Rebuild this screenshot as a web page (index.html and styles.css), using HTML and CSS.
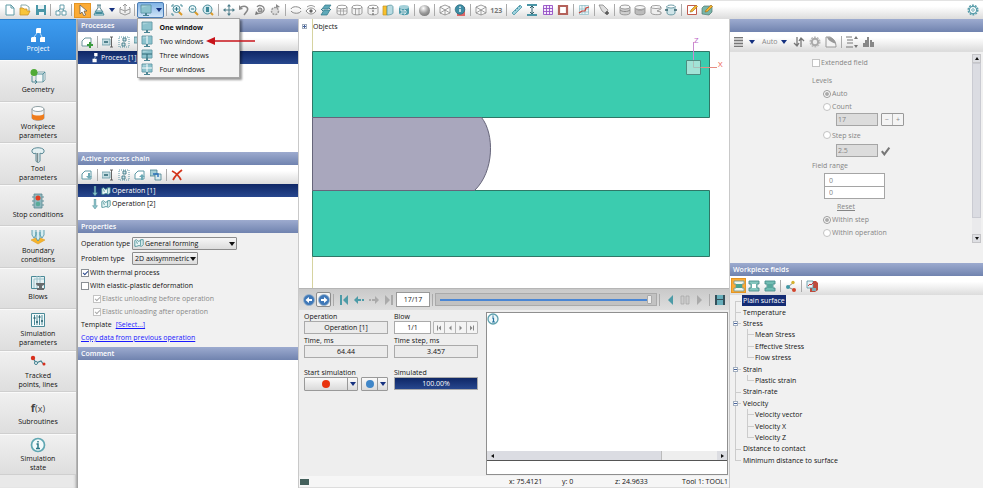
FILE: index.html
```html
<!DOCTYPE html>
<html lang="en">

<head>
    <meta charset="UTF-8">
    <meta name="viewport" content="width=device-width, initial-scale=1.0">
    <title>Simulation</title>
    <link rel="stylesheet" href="styles.css">
</head>

<body>
    <!-- Icon sprite -->
    <svg class="sprite" aria-hidden="true">
        <symbol id="doc" viewBox="0 0 12 12"><path d="M2 1h5l3 3v7H2z" fill="#fff" stroke="#5f9aa5"/><path d="M7 1v3h3" fill="none" stroke="#5f9aa5"/></symbol>
        <symbol id="open" viewBox="0 0 12 12"><path d="M2 6V1h5l3 2v5" fill="#fff" stroke="#8aa"/><path d="M1 11V4h3l1 1h3v2h3l-2 4z" fill="#f8c53a" stroke="#c8922a" stroke-width=".8"/></symbol>
        <symbol id="save" viewBox="0 0 12 12"><path d="M1 1h10v10H1z" fill="#4a97a8"/><path d="M3 1h6v4H3zM4 8h5v3H4z" fill="#e9f2f4"/></symbol>
        <symbol id="tree" viewBox="0 0 12 12"><path d="M5 1h4v4H5zM1 7h4v4H1zM7 7h4v4H7z" fill="#fff" stroke="#5795a3" stroke-width=".9"/><path d="M3 7l2-2M8 5l1 2" stroke="#5795a3"/></symbol>
        <symbol id="process" viewBox="0 0 12 12"><path d="M5 0h4v4H5zM3 7h5v4H3z" fill="#fff"/><path d="M7 4L5 7" stroke="#b9dbe2"/></symbol>
        <symbol id="pointer" viewBox="0 0 12 12"><path d="M3 1v9l2-2 2 4 1.500-1L7 7h3z" fill="#fff" stroke="#555" stroke-width=".7"/></symbol>
        <symbol id="flask" viewBox="0 0 12 12"><path d="M4 1h4M5 1v3L2 8h8L7 4V1" fill="#fff" stroke="#55808c"/><path d="M3 7h6l2 4H1z" fill="#e8f4f6" stroke="#438c9c"/><path d="M3 8h6l1 2H2z" fill="#438c9c"/></symbol>
        <symbol id="box" viewBox="0 0 12 12"><path d="M2 3l-1 1v5l5 2 5-2V4l-1-1M1 5l5 2 5-2M6 0v9M4 2l2-2 2 2" fill="none" stroke="#9a9a9a"/></symbol>
        <symbol id="screen" viewBox="0 0 12 12"><path d="M1 1h10v8H1z" fill="#a9d3db" stroke="#4d8694" stroke-width=".8"/><path d="M1 4l10-3v8H1z" fill="#6fb2bf" opacity=".5"/><path d="M5 9h2v2h2v1H3v-1h2z" fill="#4d8694"/></symbol>
        <symbol id="screen2" viewBox="0 0 12 12"><use href="#screen"/><path d="M6 1v8" stroke="#fff"/></symbol>
        <symbol id="screen3" viewBox="0 0 12 12"><use href="#screen"/><path d="M1 5h10M6 5v4" stroke="#2d6774"/></symbol>
        <symbol id="screen4" viewBox="0 0 12 12"><use href="#screen"/><path d="M6 1v8M1 5h10" stroke="#fff"/></symbol>
        <symbol id="lens" viewBox="0 0 12 12"><path d="M7.500 7.500L11 11" stroke="#dc9a28" stroke-width="2"/><circle cx="5.500" cy="5" r="3.500" fill="#e4f4f7" stroke="#4b8d9b"/></symbol>
        <symbol id="zoomin" viewBox="0 0 12 12"><path d="M1 3V1h2M9 1h2v2M1 9v2h2" fill="none" stroke="#4b8d9b"/><use href="#lens"/><path d="M3.500 5h4M5.500 3v4" stroke="#2b7282"/></symbol>
        <symbol id="zoomout" viewBox="0 0 12 12"><use href="#lens"/><path d="M4 5h3" stroke="#2b7282"/></symbol>
        <symbol id="zoomfit" viewBox="0 0 12 12"><path d="M8 8l3 3" stroke="#dc9a28" stroke-width="2"/><circle cx="5.500" cy="5.500" r="4.500" fill="#cfe8ed" stroke="#4b8d9b"/><path d="M4 3h3v5H4z" fill="#3c8797"/></symbol>
        <symbol id="move" viewBox="0 0 12 12"><path d="M6 1v10M1 6h10" stroke="#4c7d89"/><path d="M6 0l2 2.500H4zM6 12l2-2.500H4zM0 6l2.500-2v4zM12 6L9.500 4v4z" fill="#4c7d89"/></symbol>
        <symbol id="rotate" viewBox="0 0 12 12"><path d="M3 3c5-2 8 1 6 4L6 11" fill="none" stroke="#888" stroke-width="1.500"/><path d="M1 1v5l4-1z" fill="#888"/></symbol>
        <symbol id="orbit" viewBox="0 0 12 12"><path d="M3 3c2-3 8-1 7 3-1 3-4 4-6 3" fill="none" stroke="#888" stroke-width="1.300"/><circle cx="6" cy="6" r="2" fill="#bbb" stroke="#777"/><path d="M1 11l1-4 3 3z" fill="#777"/></symbol>
        <symbol id="spin" viewBox="0 0 12 12"><circle cx="6" cy="7" r="3.500" fill="#ddd" stroke="#999" stroke-width="1.500" stroke-dasharray="2 1"/><path d="M7 0l4 3-4 1z" fill="#888"/></symbol>
        <symbol id="loop" viewBox="0 0 12 12"><path d="M1 5c1-3 8-3 10 0M11 7c-1 3-8 3-10 0" fill="none" stroke="#888"/></symbol>
        <symbol id="eye" viewBox="0 0 12 12"><path d="M1 7c3-4 7-4 10 0-3 4-7 4-10 0z" fill="#fff" stroke="#888"/><circle cx="6" cy="7" r="1.700" fill="#666"/><path d="M2 3c3-2 5-2 8 0" fill="none" stroke="#999"/></symbol>
        <symbol id="layers" viewBox="0 0 12 12"><path d="M5 1h6L8 5H2z" fill="#5fa9b9" stroke="#2f7686" stroke-width=".7"/><path d="M4 6h6l-3 5H1z" fill="#5fa9b9" stroke="#2f7686" stroke-width=".7"/><path d="M1 5l2 2M9 4l2 2" stroke="#2f7686"/></symbol>
        <symbol id="cyl" viewBox="0 0 12 12"><path d="M1 3v6c0 2.500 10 2.500 10 0V3" fill="#f2f2f2" stroke="#888" stroke-width=".8"/><ellipse cx="6" cy="3" rx="5" ry="1.800" fill="#fff" stroke="#888" stroke-width=".8"/></symbol>
        <symbol id="cylgrid" viewBox="0 0 12 12"><use href="#cyl"/><path d="M1 7h10M4.500 5v6M7.500 5v6" stroke="#999" stroke-width=".7"/></symbol>
        <symbol id="cylhalf" viewBox="0 0 12 12"><use href="#cyl"/><path d="M4.500 4.500V11M8 4v7" stroke="#888" stroke-width=".7"/></symbol>
        <symbol id="cyldash" viewBox="0 0 12 12"><use href="#cyl"/><path d="M6 3v8" stroke="#555" stroke-dasharray="2 1"/></symbol>
        <symbol id="cylcut" viewBox="0 0 12 12"><path d="M1 2h4v9H1z" fill="#f8c02c" stroke="#c59322" stroke-width=".7"/><path d="M5 2c5-2 6 0 6 1v6c0 1-3 2-6 2z" fill="#b8dbe2" stroke="#478997" stroke-width=".7"/></symbol>
        <symbol id="cyl3d" viewBox="0 0 12 12"><path d="M1 3v6c0 3 10 3 10 0V3" fill="#4f9bab"/><ellipse cx="6" cy="3" rx="5" ry="2" fill="#a3d0d9"/><path d="M2 6h2v4H2M6 6v4h1l1-1V7L7 6z" fill="none" stroke="#fff" stroke-width=".8"/></symbol>
        <symbol id="mesh" viewBox="0 0 12 12"><path d="M1 3l5-2 5 2v6l-5 2-5-2zM1 3l5 3 5-3M6 6v5M1 9l5-3 5 3" fill="#fafafa" stroke="#888" stroke-width=".8"/></symbol>
        <symbol id="meshinfo" viewBox="0 0 12 12"><path d="M3 3h8v9H3z" fill="#d66"/><circle cx="6" cy="5.500" r="4.800" fill="#3e8da5" stroke="#28697a" stroke-width=".7"/><path d="M6 5v3M6 2.500v1.500" stroke="#fff" stroke-width="1.400"/></symbol>
        <symbol id="ruler" viewBox="0 0 12 12"><path d="M1 9l8-8 2 2-8 8z" fill="#9cd0dc" stroke="#4b95a6" stroke-width=".8"/><path d="M4 6l1 1M6 4l1 1M8 2l1 1" stroke="#4b95a6"/></symbol>
        <symbol id="gap" viewBox="0 0 12 12"><path d="M1 0h10v2H1zM1 10h10v2H1z" fill="#4b95a6"/><path d="M6 2v8M4 4l2-2 2 2M4 8l2 2 2-2" fill="none" stroke="#33616c"/></symbol>
        <symbol id="grid" viewBox="0 0 12 12"><path d="M1.500 1.500h9v9h-9zM4.500 1v10M7.500 1v10M1 4.500h10M1 7.500h10" fill="#f4e9fb" stroke="#9550c5" stroke-width=".9"/></symbol>
        <symbol id="frame" viewBox="0 0 12 12"><path d="M2 2h8v8H2z" fill="#fff" stroke="#b4615a" stroke-width="2.200"/></symbol>
        <symbol id="chart" viewBox="0 0 12 12"><path d="M1.500 1.500h9v9h-9zM4 1v9M7 1v9M1 5h10M1 8h10" fill="#eaf5f7" stroke="#8cbac4" stroke-width=".7"/><path d="M1 9l3-2h3l1-3 3-1" fill="none" stroke="#c94137" stroke-width="1.200"/></symbol>
        <symbol id="cutadd" viewBox="0 0 12 12"><path d="M1 1h4l5 5-2 4-4-3z" fill="#ddd" stroke="#888" stroke-width=".8"/><path d="M9 7v4M7 9h4" stroke="#555" stroke-width="1.500"/></symbol>
        <symbol id="drum" viewBox="0 0 12 12"><path d="M1 3v6c0 2.500 10 2.500 10 0V3" fill="#cfcfcf" stroke="#888" stroke-width=".8"/><ellipse cx="6" cy="3" rx="5" ry="2" fill="#f6f6f6" stroke="#888" stroke-width=".8"/><path d="M1 6c2 2 8 2 10 0" fill="none" stroke="#888"/></symbol>
        <symbol id="drumhalf" viewBox="0 0 12 12"><path d="M1 4v5c0 2.500 10 2.500 10 0V4l-3 2H4z" fill="#bbb" stroke="#888" stroke-width=".8"/><ellipse cx="6" cy="3.500" rx="5" ry="2" fill="#f6f6f6" stroke="#888" stroke-width=".8"/></symbol>
        <symbol id="drumcut" viewBox="0 0 12 12"><path d="M1 3v6c1 2 8 2 10 1V8L7 7l4-2V3" fill="#eee" stroke="#888" stroke-width=".8"/><ellipse cx="6" cy="3" rx="5" ry="1.500" fill="#fff" stroke="#888" stroke-width=".8"/></symbol>
        <symbol id="drumblue" viewBox="0 0 12 12"><path d="M2 2v7c0 2.500 8 2.500 8 0V2" fill="#cfe4e8" stroke="#4c8592" stroke-width=".8"/><ellipse cx="6" cy="2.500" rx="4" ry="1.500" fill="#fff" stroke="#4c8592" stroke-width=".8"/><path d="M0 6h3M9 6h3" stroke="#33616c" stroke-width="1.500"/></symbol>
        <symbol id="editbox" viewBox="0 0 12 12"><path d="M1.500 1.500h9v9h-9z" fill="#fff" stroke="#c05a4c"/><path d="M4 8l1-2 5-5 1.500 1.500-5 5z" fill="#f5b52e" stroke="#a06a1a" stroke-width=".6"/></symbol>
        <symbol id="editcube" viewBox="0 0 12 12"><path d="M1 4l2-2h8v6l-3 3-7-1z" fill="#77b5a9" stroke="#50776f" stroke-width=".7"/><path d="M4 8l1-2 5-5 1.500 1.500-5 5z" fill="#f5b52e" stroke="#a06a1a" stroke-width=".6"/></symbol>
        <symbol id="gear" viewBox="0 0 12 12"><circle cx="6" cy="6" r="4.800" fill="none" stroke="currentColor" stroke-width="1.500" stroke-dasharray="1.900 1.100"/><circle cx="6" cy="6" r="3.600" fill="#fff" stroke="currentColor" stroke-width="1.200"/><circle cx="6" cy="6" r="1.300" fill="none" stroke="currentColor" stroke-width=".8"/></symbol>
        <symbol id="add" viewBox="0 0 12 12"><path d="M1 10V5l3-3h6v8z" fill="#fff" stroke="#6d959e"/><path d="M9 6v6M6 9h6" stroke="#3a9b3e" stroke-width="2"/></symbol>
        <symbol id="addin" viewBox="0 0 12 12"><path d="M1 10V5l3-3h6v8z" fill="#fff" stroke="#5c98a5"/><path d="M7 4h2v3h2L8 10 5 7h2z" fill="#6ca9b5"/></symbol>
        <symbol id="addout" viewBox="0 0 12 12"><path d="M1 10V5l3-3h6v8z" fill="#fff" stroke="#5c98a5"/><path d="M7 11h2V8h2L8 5 5 8h2z" fill="#6ca9b5"/></symbol>
        <symbol id="rename" viewBox="0 0 12 12"><path d="M0 3h8v6H0z" fill="#c5dde2" stroke="#6799a5" stroke-width=".8"/><path d="M2 5h4v2H2z" fill="#50818c"/><path d="M8 1h3M8 11h3M9.500 1v10" stroke="#555" stroke-width=".9"/></symbol>
        <symbol id="copytree" viewBox="0 0 12 12"><path d="M1 1h10v10H1z" fill="none" stroke="#5c98a5" stroke-dasharray="1 1"/><path d="M5 2h3v3H5zM4 7h3v3H4z" fill="#cfe3e7" stroke="#3d7683" stroke-width=".9"/></symbol>
        <symbol id="shuffle" viewBox="0 0 12 12"><path d="M0 1h7v6H0z" fill="#a5ced6" stroke="#47818e" stroke-width=".8"/><path d="M5 5h6v6H5z" fill="#d7eaee" stroke="#47818e" stroke-width=".8"/><path d="M3 5h5v3" fill="none" stroke="#2a70bb" stroke-width="1.400"/></symbol>
        <symbol id="cross" viewBox="0 0 12 12"><path d="M1 2c4 2 7 5 9 9M11 1C7 4 4 7 2 11" fill="none" stroke="#d3351c" stroke-width="1.800"/></symbol>
        <symbol id="down" viewBox="0 0 12 12"><path d="M5 0h2v8h2l-3 4-3-4h2z" fill="#8cc6cc" stroke="#377884" stroke-width=".5"/></symbol>
        <symbol id="part" viewBox="0 0 12 12"><path d="M1 3l2-1 2 2 3-1V2h3v6l-2 2-3-1-3 1H1z" fill="#e8f5f5" stroke="#3f8a92"/><path d="M8 3v6M3 4l1 3" stroke="#3f8a92"/></symbol>
        <!-- step navigation -->
        <symbol id="circleleft" viewBox="0 0 12 12"><circle cx="6" cy="6" r="5.500" fill="#3f78b8" stroke="#9bb4cc" stroke-width=".8"/><path d="M2.500 6L6 3v2h3v2H6v2z" fill="#fff"/></symbol>
        <symbol id="circleright" viewBox="0 0 12 12"><circle cx="6" cy="6" r="5.500" fill="#3f78b8" stroke="#9bb4cc" stroke-width=".8"/><path d="M9.500 6L6 3v2H3v2h3v2z" fill="#fff"/></symbol>
        <symbol id="first" viewBox="0 0 12 12"><path d="M2 1h2v10H2zM10 1v10L5 6z" fill="currentColor"/></symbol>
        <symbol id="last" viewBox="0 0 12 12"><path d="M8 1h2v10H8zM2 1v10l5-5z" fill="currentColor"/></symbol>
        <symbol id="prev" viewBox="0 0 12 12"><path d="M1 6l4-4v3h3v2H5v3zM9 5h2v2H9z" fill="currentColor"/></symbol>
        <symbol id="next" viewBox="0 0 12 12"><path d="M11 6L7 2v3H4v2h3v3zM1 5h2v2H1z" fill="currentColor"/></symbol>
        <symbol id="playleft" viewBox="0 0 12 12"><path d="M9 1v10L4 6z" fill="currentColor"/></symbol>
        <symbol id="playright" viewBox="0 0 12 12"><path d="M3 1v10l5-5z" fill="currentColor"/></symbol>
        <symbol id="pause" viewBox="0 0 12 12"><path d="M2 2h3v8H2zM7 2h3v8H7z" fill="#ccc" stroke="#a5a5a5" stroke-width=".7"/></symbol>
        <symbol id="film" viewBox="0 0 12 12"><path d="M1 1h10v10H1z" fill="#33505a"/><path d="M3 1h6v4H3zM3 6h6v5H3z" fill="#67aebb"/></symbol>
        <symbol id="info" viewBox="0 0 12 12"><circle cx="6" cy="6" r="5" fill="#eef8fa" stroke="#5da0ad" stroke-width="1.300"/><path d="M5 5h1.500v4M5 9h3M6 2.500v1.200" fill="none" stroke="#2673a0" stroke-width="1.200"/></symbol>
        <!-- right panel -->
        <symbol id="lines" viewBox="0 0 12 12"><path d="M1 1h9v10H1z" fill="#c9c9c9"/><path d="M1 1.500h9M1 4.500h9M1 7.500h9M1 10.500h9" stroke="#777"/></symbol>
        <symbol id="updown" viewBox="0 0 12 12"><path d="M4 1v9M1 7l3 3 2-3M8 11V2M6 5l2-3 3 3" fill="none" stroke="#777" stroke-width="1.300"/></symbol>
        <symbol id="gearfill" viewBox="0 0 12 12"><circle cx="6" cy="6" r="4.800" fill="none" stroke="#bbb" stroke-width="1.500" stroke-dasharray="1.900 1.100"/><circle cx="6" cy="6" r="3.200" fill="#eee" stroke="#aaa" stroke-width="2"/></symbol>
        <symbol id="curve" viewBox="0 0 12 12"><path d="M1 1h4c4 2 6 5 6 10H1z" fill="#f3f3f3" stroke="#999"/><path d="M2 1c1 4 5 5 9 7-1-4-3-7-9-7z" fill="#999"/></symbol>
        <symbol id="range" viewBox="0 0 12 12"><path d="M0 1h6M1 4h6M1 7h6M0 11h7" stroke="#777"/><path d="M8 3l2-3 2 3zM8 9h4l-2 3z" fill="#777"/></symbol>
        <symbol id="hist" viewBox="0 0 12 12"><path d="M1 7h2v4H1zM3 4h2v7H3zM5 1h2v10H5zM8 4h2v7H8zM10 6h2v5h-2z" fill="#888"/></symbol>
        <symbol id="press" viewBox="0 0 12 12"><path d="M1 1h10v3H9v4h2v3H1V8h2V4H1z" fill="#eef5ee" stroke="#7d9b8d" stroke-width=".9"/><path d="M3 4h6v4H3z" fill="#4aa391"/></symbol>
        <symbol id="presswhite" viewBox="0 0 12 12"><path d="M1 1h10v3H9v4h2v3H1V8h2V4H1z" fill="#84c6bd" stroke="#4b8f8d" stroke-width=".9"/><path d="M4 4h4v4H4z" fill="#fff"/></symbol>
        <symbol id="pressfull" viewBox="0 0 12 12"><path d="M1 1h10v3H9v4h2v3H1V8h2V4H1z" fill="#72bdb3" stroke="#4b8f8d" stroke-width=".9"/><path d="M4 4h4v4H4z" fill="#58a89c"/></symbol>
        <symbol id="share" viewBox="0 0 12 12"><path d="M9 2L3 7l6 3" fill="none" stroke="#888"/><circle cx="8" cy="2.500" r="1.700" fill="#d4b22f"/><circle cx="3" cy="7" r="2" fill="#3f97a5"/><circle cx="9" cy="10" r="2" fill="#d2452c"/></symbol>
        <symbol id="redchart" viewBox="0 0 12 12"><path d="M4 3l3-2h3l2 2v7l-3 2H4z" fill="#bf4b3c"/><path d="M6 8h4v3H6z" fill="#7dafb8"/><path d="M1 1h6v7H1z" fill="#e6f2f5" stroke="#5790a0" stroke-width=".8"/><path d="M2 6l2-2 1 1 3-3" fill="none" stroke="#c33"/></symbol>
        <symbol id="check" viewBox="0 0 12 12"><path d="M1 6l3 4 6-8" fill="none" stroke="#777" stroke-width="2.500"/></symbol>
        <!-- section icons -->
        <symbol id="n-project" viewBox="0 0 16 16"><path d="M6 2l1-1h4v5H6zM1 11l1-1h4v5H1zM10 11l1-1h4v5h-5z" fill="#fff"/><path d="M4 10l3-4M10 6l2 4" stroke="#d8edff" stroke-width=".8"/></symbol>
        <symbol id="n-geometry" viewBox="0 0 16 16"><path d="M6 6l2-2h7v8l-2 2H6z" fill="#f3f7f7" stroke="#67969f" stroke-width=".8"/><path d="M6 6h7v8M13 6l2-2M2 8v6h5M5 12l2 2-2 2" fill="none" stroke="#418290" stroke-width=".9"/><circle cx="4" cy="4.500" r="3.500" fill="#4faa37"/></symbol>
        <symbol id="n-work" viewBox="0 0 16 16"><path d="M2 4v9c0 3 12 3 12 0V4" fill="#f1f4f4" stroke="#878787" stroke-width=".8"/><path d="M2 9c3 2 9 2 12 0v4c0 3-12 3-12 0z" fill="#ef7c1c"/><ellipse cx="8" cy="4" rx="6" ry="2.500" fill="#fff" stroke="#778c90" stroke-width=".8"/></symbol>
        <symbol id="n-tool" viewBox="0 0 16 16"><path d="M2 3c2-3 10-3 12 0v2c-1 2-3 2-4 1v8c-1 2-3 2-4 0V6C5 7 3 7 2 5z" fill="#e4f0f2" stroke="#5a8995"/><path d="M7.500 6v9" stroke="#7b8b8e" stroke-width="1.500"/></symbol>
        <symbol id="n-stop" viewBox="0 0 16 16"><path d="M2 4h12M2 8h12M2 12h12" stroke="#5f929b"/><path d="M4 1h8v14H4z" fill="#8fb8bf" stroke="#5b8993" stroke-width=".8"/><circle cx="8" cy="5" r="2.500" fill="#e23e22"/><circle cx="8" cy="11" r="2.300" fill="#57aa98"/></symbol>
        <symbol id="n-bound" viewBox="0 0 16 16"><path d="M1 11l7-3 7 3-7 4z" fill="#f6b42c" stroke="#d79419" stroke-width=".5"/><path d="M2 1v5l2 3 2-3V1M6 3v6l2 3 2-3V3M10 1v5l2 3 2-3V1" fill="#d5ecf0" stroke="#4490a1" stroke-width=".8"/></symbol>
        <symbol id="n-blows" viewBox="0 0 16 16"><path d="M1.500 1.500h13v12h-13z" fill="#e5f1f3" stroke="#4a8997"/><path d="M4 4h10M4 4v9M7 1v12M10 1v8" stroke="#9dc2ca"/><path d="M6 8h9c0 2-2 2-3 3v2h2v2H7v-2h2v-2c-2 0-3-1-3-3z" fill="#686b6d"/></symbol>
        <symbol id="n-sim" viewBox="0 0 16 16"><path d="M1.500 1.500h13v13h-13z" fill="#f3fafb" stroke="#4a8997"/><path d="M4.500 3v10M7 3v10M9.500 3v10M12 3v10" stroke="#4a8997"/><path d="M3.500 6h2M6 10h2M8.500 5h2M11 9h2" stroke="#27606d" stroke-width="1.500"/></symbol>
        <symbol id="n-track" viewBox="0 0 16 16"><path d="M3 4l3 5 5-2 3 4" fill="none" stroke="#3f808e" stroke-width="1.200"/><circle cx="3" cy="4" r="2.200" fill="#d8301d"/><circle cx="6" cy="9" r="1.500" fill="#fff" stroke="#3f808e"/><circle cx="14" cy="10" r="1.500" fill="#d8301d"/></symbol>
        <symbol id="n-info" viewBox="0 0 16 16"><circle cx="8" cy="8" r="6.500" fill="#f3fafb" stroke="#60a7b2" stroke-width="1.700"/><path d="M6.500 7H8v4M6 11.500h4M8 4v1.500" fill="none" stroke="#2d7886" stroke-width="1.500"/></symbol>
    </svg>

    <!-- Main toolbar -->
    <header class="toolbar">
        <div class="tools">
            <button class="tool" aria-label="New"><svg><use href="#doc"/></svg></button>
            <button class="tool" aria-label="Open"><svg><use href="#open"/></svg></button>
            <button class="tool" aria-label="Save"><svg><use href="#save"/></svg></button>
            <span class="sep"></span>
            <button class="tool" aria-label="Process tree"><svg><use href="#tree"/></svg></button>
            <span class="sep"></span>
            <button class="tool active" aria-label="Pointer"><svg><use href="#pointer"/></svg></button>
            <button class="tool" aria-label="Material"><svg><use href="#flask"/></svg></button>
            <button class="drop" aria-label="Material list"><i class="caret"></i></button>
            <button class="tool" aria-label="Box"><svg><use href="#box"/></svg></button>
            <span class="sep"></span>
            <div class="windows">
                <button class="windows-button" aria-label="Windows"><svg><use href="#screen"/></svg><i class="caret"></i></button>
                <div class="menu">
                    <button class="menu-item current"><svg><use href="#screen"/></svg>One window</button>
                    <button class="menu-item"><svg><use href="#screen2"/></svg>Two windows</button>
                    <button class="menu-item"><svg><use href="#screen3"/></svg>Three windows</button>
                    <button class="menu-item"><svg><use href="#screen4"/></svg>Four windows</button>
                    <svg class="arrow" viewBox="0 0 50 8"><path d="M6 4h43" stroke="#c8141b" stroke-width="1.500"/><path d="M0 4l9-4v8z" fill="#c8141b"/></svg>
                </div>
            </div>
            <span class="sep"></span>
            <button class="tool" aria-label="Zoom in"><svg><use href="#zoomin"/></svg></button>
            <button class="tool" aria-label="Zoom out"><svg><use href="#zoomout"/></svg></button>
            <button class="tool" aria-label="Zoom fit"><svg><use href="#zoomfit"/></svg></button>
            <span class="sep"></span>
            <button class="tool" aria-label="Move"><svg><use href="#move"/></svg></button>
            <button class="tool" aria-label="Rotate"><svg><use href="#rotate"/></svg></button>
            <button class="tool" aria-label="Orbit"><svg><use href="#orbit"/></svg></button>
            <button class="tool" aria-label="Spin"><svg><use href="#spin"/></svg></button>
            <span class="sep"></span>
            <button class="tool" aria-label="Loop"><svg><use href="#loop"/></svg></button>
            <button class="tool" aria-label="Visibility"><svg><use href="#eye"/></svg></button>
            <button class="tool" aria-label="Layers"><svg><use href="#layers"/></svg></button>
            <button class="tool" aria-label="Grid body"><svg><use href="#cylgrid"/></svg></button>
            <button class="tool" aria-label="Half body"><svg><use href="#cylhalf"/></svg></button>
            <button class="tool" aria-label="Axis"><svg><use href="#cyldash"/></svg></button>
            <button class="tool" aria-label="Section"><svg><use href="#cylcut"/></svg></button>
            <button class="tool" aria-label="3D"><svg><use href="#cyl3d"/></svg></button>
            <span class="sep"></span>
            <button class="tool" aria-label="Shading"><span class="sphere"></span></button>
            <span class="sep"></span>
            <button class="tool" aria-label="Mesh"><svg><use href="#mesh"/></svg></button>
            <button class="tool" aria-label="Mesh info"><svg><use href="#meshinfo"/></svg></button>
            <span class="sep"></span>
            <button class="tool" aria-label="Nodes"><svg><use href="#mesh"/></svg></button>
            <button class="tool numbers">123</button>
            <span class="sep"></span>
            <button class="tool" aria-label="Ruler"><svg><use href="#ruler"/></svg></button>
            <button class="tool" aria-label="Distance"><svg><use href="#gap"/></svg></button>
            <button class="tool" aria-label="Grid"><svg><use href="#grid"/></svg></button>
            <button class="tool" aria-label="Frame"><svg><use href="#frame"/></svg></button>
            <span class="sep"></span>
            <button class="tool" aria-label="Chart"><svg><use href="#chart"/></svg></button>
            <span class="sep"></span>
            <button class="tool" aria-label="Add cut"><svg><use href="#cutadd"/></svg></button>
            <span class="sep"></span>
            <button class="tool" aria-label="Contour"><svg><use href="#drum"/></svg></button>
            <button class="tool" aria-label="Isolines"><svg><use href="#drumhalf"/></svg></button>
            <button class="tool" aria-label="Cut view"><svg><use href="#drumcut"/></svg></button>
            <button class="tool" aria-label="Mirror"><svg><use href="#drumblue"/></svg></button>
            <span class="sep"></span>
            <button class="tool" aria-label="Edit plane"><svg><use href="#editbox"/></svg></button>
            <button class="tool" aria-label="Edit body"><svg><use href="#editcube"/></svg></button>
        </div>
        <button class="settings" aria-label="Settings"><svg><use href="#gear"/></svg></button>
    </header>

    <main class="layout">
        <nav class="sections">
            <a class="section selected" href="#"><svg><use href="#n-project"/></svg>Project</a>
            <a class="section" href="#"><svg><use href="#n-geometry"/></svg>Geometry</a>
            <a class="section" href="#"><svg><use href="#n-work"/></svg>Workpiece<br>parameters</a>
            <a class="section" href="#"><svg><use href="#n-tool"/></svg>Tool<br>parameters</a>
            <a class="section" href="#"><svg><use href="#n-stop"/></svg>Stop conditions</a>
            <a class="section" href="#"><svg><use href="#n-bound"/></svg>Boundary<br>conditions</a>
            <a class="section" href="#"><svg><use href="#n-blows"/></svg>Blows</a>
            <a class="section" href="#"><svg><use href="#n-sim"/></svg>Simulation<br>parameters</a>
            <a class="section" href="#"><svg><use href="#n-track"/></svg>Tracked<br>points, lines</a>
            <a class="section" href="#"><span class="fx"><b>f</b>(x)</span>Subroutines</a>
            <a class="section" href="#"><svg><use href="#n-info"/></svg>Simulation<br>state</a>
        </nav>

        <!-- Project panel -->
        <section class="project">
            <h2 class="title">Processes</h2>
            <div class="bar">
                <button aria-label="Add process"><svg><use href="#add"/></svg></button>
                <span class="sep"></span>
                <button aria-label="Rename process"><svg><use href="#rename"/></svg></button>
                <button aria-label="Copy process"><svg><use href="#copytree"/></svg></button>
                <button aria-label="Move process"><svg><use href="#shuffle"/></svg></button>
            </div>
            <div class="list processes">
                <div class="row chosen process"><svg><use href="#process"/></svg>Process [1]</div>
            </div>

            <h2 class="title">Active process chain</h2>
            <div class="bar">
                <button aria-label="Add operation"><svg><use href="#addin"/></svg></button>
                <span class="sep"></span>
                <button aria-label="Rename operation"><svg><use href="#rename"/></svg></button>
                <button aria-label="Copy operation"><svg><use href="#copytree"/></svg></button>
                <button aria-label="Export operation"><svg><use href="#addout"/></svg></button>
                <button aria-label="Replace operation"><svg><use href="#shuffle"/></svg></button>
                <span class="sep"></span>
                <button aria-label="Delete operation"><svg><use href="#cross"/></svg></button>
            </div>
            <div class="list chain">
                <div class="row chosen"><svg><use href="#down"/></svg><svg><use href="#part"/></svg>Operation [1]</div>
                <div class="row"><svg><use href="#down"/></svg><svg><use href="#part"/></svg>Operation [2]</div>
            </div>

            <h2 class="title">Properties</h2>
            <form class="properties">
                <div class="pick">
                    <label for="operationType">Operation type</label>
                    <span class="select wide">
                        <svg><use href="#part"/></svg>
                        <select id="operationType"><option>General forming</option></select>
                    </span>
                </div>
                <div class="pick">
                    <label for="problemType">Problem type</label>
                    <span class="select">
                        <select id="problemType"><option>2D axisymmetric</option></select>
                    </span>
                </div>
                <label class="option"><input type="checkbox" checked>With thermal process</label>
                <label class="option"><input type="checkbox">With elastic-plastic deformation</label>
                <label class="option nested"><input type="checkbox" checked disabled>Elastic unloading before operation</label>
                <label class="option nested"><input type="checkbox" checked disabled>Elastic unloading after operation</label>
                <div class="option template">Template <a href="#">[Select...]</a></div>
                <div class="option"><a href="#">Copy data from previous operation</a></div>
            </form>

            <h2 class="title">Comment</h2>
            <div class="list comment"></div>
        </section>

        <!-- Viewport and playback -->
        <section class="center">
            <div class="viewport">
                <div class="objects"><span class="toggle plus"></span>Objects</div>
                <svg class="scene" viewBox="0 0 430 269" preserveAspectRatio="xMinYMin meet">
                    <path d="M13.500 0v269" stroke="#d6d3a0"/>
                    <path d="M13.500 32.500h397v66h-397zM13.500 171.500h397v66h-397z" fill="#3bccaf" stroke="#2f7767"/>
                    <path d="M13.500 98.500h169c13 16 13 54-7 73h-162z" fill="#a9a7bd" stroke="#66657a"/>
                    <path d="M394.500 23v25" stroke="#c98ad0"/>
                    <path d="M394 48.500h24" stroke="#e58e84"/>
                    <path d="M387.500 41.500h14v14h-14z" fill="#a1e3d6" stroke="#4d8c80"/>
                    <path d="M394.500 42v6.500h7" fill="none" stroke="#a9bfb8"/>
                    <text x="395" y="24" fill="#bd66c6">Z</text>
                    <text x="419" y="48" fill="#ee5b50">X</text>
                </svg>
            </div>

            <div class="playback">
                <button aria-label="Back"><svg><use href="#circleleft"/></svg></button>
                <button class="boxed" aria-label="Forward"><svg><use href="#circleright"/></svg></button>
                <span class="sep"></span>
                <button class="teal" aria-label="First record"><svg><use href="#first"/></svg></button>
                <button class="teal" aria-label="Previous record"><svg><use href="#prev"/></svg></button>
                <button aria-label="Next record" disabled><svg><use href="#next"/></svg></button>
                <button aria-label="Last record" disabled><svg><use href="#last"/></svg></button>
                <input class="record" type="text" value="17/17" aria-label="Record">
                <span class="sep"></span>
                <div class="slider"><input type="range" min="1" max="17" value="17" aria-label="Record slider"></div>
                <span class="sep"></span>
                <button class="teal" aria-label="Play back"><svg><use href="#playleft"/></svg></button>
                <button aria-label="Pause" disabled><svg><use href="#pause"/></svg></button>
                <button aria-label="Play" disabled><svg><use href="#playright"/></svg></button>
                <span class="sep"></span>
                <button aria-label="Video"><svg><use href="#film"/></svg></button>
            </div>

            <div class="run">
                <div class="readings">
                    <div class="reading">
                        <span>Operation</span>
                        <output class="field">Operation [1]</output>
                    </div>
                    <div class="reading">
                        <label for="blow">Blow</label>
                        <div class="blow">
                            <input class="field" id="blow" type="text" value="1/1">
                            <div class="steps">
                                <button aria-label="First blow"><svg><use href="#first"/></svg></button>
                                <button aria-label="Previous blow"><svg><use href="#playleft"/></svg></button>
                                <button aria-label="Next blow"><svg><use href="#playright"/></svg></button>
                                <button aria-label="Last blow"><svg><use href="#last"/></svg></button>
                            </div>
                        </div>
                    </div>
                    <div class="reading">
                        <span>Time, ms</span>
                        <output class="field">64.44</output>
                    </div>
                    <div class="reading">
                        <span>Time step, ms</span>
                        <output class="field">3.457</output>
                    </div>
                    <div class="reading start">
                        <span>Start simulation</span>
                        <div class="launch">
                            <div class="split main">
                                <button aria-label="Start"><i class="dot red"></i></button>
                                <button class="more" aria-label="Start options"><i class="caret"></i></button>
                            </div>
                            <div class="split">
                                <button aria-label="Trace"><i class="dot blue"></i></button>
                                <button class="more" aria-label="Trace options"><i class="caret"></i></button>
                            </div>
                        </div>
                    </div>
                    <div class="reading start">
                        <span>Simulated</span>
                        <div class="field progress">100.00%</div>
                    </div>
                </div>
                <div class="log">
                    <div class="messages"><svg><use href="#info"/></svg></div>
                    <div class="hscroll">
                        <button class="left" aria-label="Scroll left"></button>
                        <span class="thumb"></span>
                        <button class="right" aria-label="Scroll right"></button>
                    </div>
                    <div class="command"></div>
                </div>
            </div>

            <footer class="status">
                <span class="monitor"></span>
                <span class="coord x">x: 75.4121</span>
                <span class="coord y">y: 0</span>
                <span class="coord z">z: 24.9633</span>
                <span>Tool 1: TOOL1</span>
            </footer>
        </section>

        <!-- Field settings -->
        <aside class="fields">
            <h2 class="title"></h2>
            <div class="bar muted">
                <button aria-label="Palette"><svg><use href="#lines"/></svg></button>
                <i class="caret"></i>
                <span class="mode">Auto</span>
                <i class="caret"></i>
                <button aria-label="Invert"><svg><use href="#updown"/></svg></button>
                <button aria-label="Options"><svg><use href="#gearfill"/></svg></button>
                <button aria-label="Curve"><svg><use href="#curve"/></svg></button>
                <span class="sep"></span>
                <button aria-label="Range"><svg><use href="#range"/></svg></button>
                <button aria-label="Histogram"><svg><use href="#hist"/></svg></button>
            </div>
            <div class="levels">
                <form class="levels-form">
                    <label class="option"><input type="checkbox" disabled>Extended field</label>
                    <div class="option heading">Levels</div>
                    <label class="option inner"><input type="radio" name="levels" checked disabled>Auto</label>
                    <label class="option inner"><input type="radio" name="levels" disabled>Count</label>
                    <div class="amount">
                        <input type="text" value="17" aria-label="Count" disabled>
                        <div class="steps"><button type="button">−</button><button type="button">+</button></div>
                    </div>
                    <label class="option inner step"><input type="radio" name="levels" disabled>Step size</label>
                    <div class="amount">
                        <input type="text" value="2.5" aria-label="Step size" disabled>
                        <button type="button" class="apply" aria-label="Apply"><svg><use href="#check"/></svg></button>
                    </div>
                    <div class="option range">Field range</div>
                    <div class="limits">
                        <input type="text" value="0" aria-label="Maximum" disabled>
                        <input type="text" value="0" aria-label="Minimum" disabled>
                    </div>
                    <div class="option reset"><a href="#">Reset</a></div>
                    <label class="option inner"><input type="radio" name="range" checked disabled>Within step</label>
                    <label class="option inner"><input type="radio" name="range" disabled>Within operation</label>
                </form>
                <div class="vscroll">
                    <button class="up" aria-label="Scroll up"></button>
                    <span class="thumb"></span>
                    <button class="down" aria-label="Scroll down"></button>
                </div>
            </div>

            <h2 class="title">Workpiece fields</h2>
            <div class="bar">
                <button class="active" aria-label="Workpiece"><svg><use href="#press"/></svg></button>
                <button aria-label="Tools"><svg><use href="#presswhite"/></svg></button>
                <button aria-label="All"><svg><use href="#pressfull"/></svg></button>
                <span class="sep"></span>
                <button aria-label="Points"><svg><use href="#share"/></svg></button>
                <span class="sep"></span>
                <button aria-label="Plot"><svg><use href="#redchart"/></svg></button>
            </div>
            <ul class="tree">
                <li class="top"><span class="picked">Plain surface</span></li>
                <li>Temperature</li>
                <li><span class="toggle"></span>Stress</li>
                <li class="sub">Mean Stress</li>
                <li class="sub">Effective Stress</li>
                <li class="sub end">Flow stress</li>
                <li><span class="toggle"></span>Strain</li>
                <li class="sub end">Plastic strain</li>
                <li>Strain-rate</li>
                <li><span class="toggle"></span>Velocity</li>
                <li class="sub">Velocity vector</li>
                <li class="sub">Velocity X</li>
                <li class="sub end">Velocity Z</li>
                <li>Distance to contact</li>
                <li class="bottom">Minimum distance to surface</li>
            </ul>
        </aside>
    </main>
</body>

</html>
```
FILE: styles.css
```css
* {
    margin: 0;
    padding: 0;
    box-sizing: border-box;
}

body {
    display: flex;
    flex-direction: column;
    height: 100vh;
    overflow: hidden;
    font-family: 'Open Sans', 'Noto Sans', sans-serif;
    font-size: 7px;
    line-height: 9px;
    color: #111;
    background-color: #f1f1f1;
}

button,
input,
select {
    font: inherit;
    color: inherit;
}

button {
    display: flex;
    align-items: center;
    justify-content: center;
    border: none;
    background: none;
}

svg {
    width: 12px;
    height: 12px;
    flex: none;
}

a {
    color: #1a1aff;
}

.sprite {
    position: absolute;
    width: 0;
    height: 0;
}

/* Shared parts */
.sep {
    flex: 0 0 5px;
    height: 12px;
    background: linear-gradient(#aaa, #aaa) center / 1px 100% no-repeat;
}

.caret {
    border: 3px solid transparent;
    border-top: 4px solid #14307f;
    border-bottom: none;
}

.title {
    flex: none;
    height: 13px;
    padding-left: 3px;
    font-size: 7px;
    font-weight: 600;
    line-height: 14px;
    color: #fff;
    background: linear-gradient(#9dabcf, #7083af);
}

.bar {
    flex: none;
    display: flex;
    align-items: center;
    height: 19px;
    padding-left: 1px;
    background: linear-gradient(#fff 30%, #dcdcdc);
}

.bar button {
    width: 16px;
    height: 16px;
}

.bar .active,
.tool.active {
    background-color: #fcab35;
    border: 1px solid #e59522;
}

.bar .active {
    width: 15px;
    height: 15px;
}

.toggle {
    display: block;
    width: 5px;
    height: 5px;
    border: 1px solid #a3afbf;
    background: linear-gradient(#44619a, #44619a) center / 3px 1px no-repeat #fff;
}

.toggle.plus {
    background: linear-gradient(#44619a, #44619a) center / 3px 1px no-repeat, linear-gradient(#44619a, #44619a) center / 1px 3px no-repeat, #fff;
}

/* Main toolbar */
.toolbar {
    display: flex;
    justify-content: space-between;
    align-items: center;
    flex: 0 0 19px;
    padding: 0 4px 0 2px;
    border-top: 1px solid #e3e3e3;
    background: linear-gradient(#fff 30%, #dcdcdc);
}

.tools {
    display: flex;
    align-items: center;
    width: 713px;
}

.tool {
    flex: 1;
    min-width: 0;
    height: 15px;
}

.drop {
    width: 10px;
    height: 15px;
}

.numbers {
    font-weight: bold;
    color: #777;
}

.sphere {
    width: 11px;
    height: 11px;
    border-radius: 50%;
    background: radial-gradient(circle at 40% 30%, #fff, #999 50%, #666);
}

.settings {
    width: 12px;
    color: #5a9eab;
}

.windows {
    position: relative;
    flex: 0 0 27px;
}

.windows-button {
    gap: 4px;
    width: 27px;
    height: 16px;
    border: 1px solid #4a7cb5;
    border-radius: 2px;
    background: linear-gradient(#7fb2e5, #cfe4f8);
}

.menu {
    position: absolute;
    top: 16px;
    left: 0;
    z-index: 2;
    width: 103px;
    padding: 1px;
    border: 1px solid #a5a5a5;
    background-color: #f4f4f4;
    box-shadow: 2px 2px 2px rgba(0, 0, 0, 0.4);
}

.menu-item {
    justify-content: flex-start;
    gap: 6px;
    width: 100%;
    height: 14px;
    padding-left: 2px;
}

.menu-item.current {
    font-weight: bold;
}

.menu .arrow {
    position: absolute;
    top: 18px;
    left: 68px;
    width: 50px;
    height: 8px;
}

/* Layout */
.layout {
    display: grid;
    grid-template-columns: 78px 220px 1fr 253px;
    flex: 1;
    min-height: 0;
}

/* Section list */
.sections {
    display: flex;
    flex-direction: column;
    padding-bottom: 13px;
    background-color: #e9e9e9;
    box-shadow: inset -4px 0 3px -2px #999;
}

.section {
    flex: 1;
    display: flex;
    flex-direction: column;
    align-items: center;
    justify-content: center;
    gap: 1px;
    border-top: 1px solid #fafafa;
    border-bottom: 1px solid #cfcfcf;
    margin-right: 2px;
    text-align: center;
    text-decoration: none;
    color: #111;
    background: linear-gradient(#f0f0f0, #dedede);
}

.section svg {
    width: 16px;
    height: 16px;
}

.section.selected {
    border-color: #2c80cc;
    color: #fff;
    background: linear-gradient(#3d9cf0, #2c82d6);
}

.fx {
    height: 16px;
    font-size: 9px;
    line-height: 16px;
    color: #444;
}

.fx b {
    font-size: 11px;
}

/* Project panel */
.project {
    display: flex;
    flex-direction: column;
}

.list {
    background-color: #fff;
}

.processes {
    flex: 0 0 101px;
}

.chain {
    flex: 0 0 36px;
}

.comment {
    flex: 1;
}

.row {
    display: flex;
    align-items: center;
    gap: 1px;
    height: 13px;
    padding-left: 12px;
}

.row svg {
    width: 10px;
    height: 10px;
}

.row.chosen {
    color: #fff;
    background: linear-gradient(#0f2766, #27478e);
}

.properties {
    flex: 0 0 114px;
    padding: 3px;
}

.pick {
    display: grid;
    grid-template-columns: 51px max-content;
    align-items: center;
    height: 15px;
}

.select {
    position: relative;
    display: flex;
    width: 66px;
}

.select.wide {
    width: 105px;
}

.select select {
    width: 100%;
    height: 13px;
    padding-left: 2px;
    border: 1px solid #8c8c8c;
    border-radius: 1px;
    background: linear-gradient(#f6f6f6, #dcdcdc);
    appearance: none;
}

.select.wide select {
    padding-left: 12px;
}

.select svg {
    position: absolute;
    top: 1px;
    left: 2px;
    width: 10px;
    height: 10px;
}

.select::after {
    content: "";
    position: absolute;
    top: 5px;
    right: 2px;
    border: 3px solid transparent;
    border-top: 4px solid #111;
    border-bottom: none;
}

.option {
    display: flex;
    align-items: center;
    gap: 1px;
    height: 13px;
}

.option.nested {
    padding-left: 12px;
    color: #8a8a8a;
}

.option.template {
    gap: 4px;
}

.option input {
    display: flex;
    align-items: center;
    justify-content: center;
    width: 8px;
    height: 8px;
    border: 1px solid #8a8f94;
    background-color: #fff;
    appearance: none;
}

.option input:disabled {
    border-color: #c3c3c3;
}

.option input[type="checkbox"]:checked::before {
    content: "";
    width: 2px;
    height: 4px;
    border: solid #2c4a8e;
    border-width: 0 1px 1px 0;
    transform: rotate(45deg);
}

.option input[type="checkbox"]:checked:disabled::before {
    border-color: #aaa;
}

.option input[type="radio"] {
    border-radius: 50%;
}

.option input[type="radio"]:checked {
    border-color: #999;
}

.option input[type="radio"]:checked::before {
    content: "";
    width: 4px;
    height: 4px;
    border-radius: 50%;
    background-color: #aaa;
}

/* Viewport */
.center {
    display: flex;
    flex-direction: column;
    min-width: 0;
    border-left: 1px solid #c9c9c9;
    border-right: 1px solid #c9c9c9;
    background-color: #eee;
}

.viewport {
    position: relative;
    flex: 1;
    min-height: 0;
    background-color: #fff;
}

.objects {
    position: absolute;
    top: 3px;
    left: 3px;
    display: flex;
    align-items: center;
    gap: 6px;
}

.scene {
    display: block;
    width: 100%;
    height: 100%;
}

.scene text {
    font-size: 8px;
}

/* Playback */
.playback {
    flex: 0 0 22px;
    display: flex;
    align-items: center;
    padding: 0 2px;
    border-top: 1px solid #b5b5b5;
    color: #aaa;
    background: linear-gradient(#c9c9c9, #dedede);
}

.playback button {
    width: 15px;
    height: 15px;
}

.playback .teal {
    color: #4d9ba7;
}

.playback .boxed {
    border: 1px solid #8c8c8c;
    border-radius: 2px;
    background-color: #f3f3f3;
}

.record {
    width: 34px;
    height: 15px;
    border: 1px solid #999;
    text-align: center;
    color: #222;
    background-color: #fff;
}

.slider {
    flex: 1;
    display: flex;
    align-items: center;
    height: 13px;
    padding: 0 4px;
    border: 1px solid #aaa;
    background-color: #c2c2c2;
}

.slider input {
    width: 100%;
    height: 10px;
    background: linear-gradient(#4a86d4, #4a86d4) center / 100% 2px no-repeat;
    appearance: none;
}

.slider input::-webkit-slider-thumb {
    width: 5px;
    height: 9px;
    border: 1px solid #aaa;
    border-radius: 1px;
    background-color: #eee;
    appearance: none;
}

/* Readings */
.run {
    flex: 0 0 166px;
    display: flex;
    gap: 8px;
    padding: 2px 1px 1px 5px;
}

.readings {
    display: grid;
    grid-template-columns: 84px 84px;
    grid-template-rows: 24px 24px 34px;
    column-gap: 6px;
    align-content: start;
}

.reading.start {
    padding-top: 8px;
}

.field {
    display: block;
    width: 100%;
    height: 13px;
    border: 1px solid #aaa;
    line-height: 11px;
    text-align: center;
    background-color: #ebebeb;
}

.blow {
    display: flex;
    gap: 2px;
}

.blow .field {
    width: 37px;
    background-color: #fff;
}

.steps {
    display: flex;
    border: 1px solid #b5b5b5;
    border-radius: 1px;
    color: #888;
}

.blow .steps {
    flex: 1;
}

.steps button {
    flex: 1;
    background-color: #f4f4f4;
}

.steps button + button {
    border-left: 1px solid #b5b5b5;
}

.steps svg {
    width: 6px;
    height: 6px;
}

.launch {
    display: flex;
    gap: 3px;
}

.split {
    flex: 1;
    display: flex;
    height: 14px;
    border: 1px solid #999;
    border-radius: 1px;
    background: linear-gradient(#fafafa, #dadada);
}

.split.main {
    flex: 0 0 54px;
}

.split button {
    flex: 1;
}

.split .more {
    flex: 0 0 10px;
    border-left: 1px solid #999;
}

.dot {
    width: 8px;
    height: 8px;
    border-radius: 50%;
}

.dot.red {
    background-color: #e8330e;
}

.dot.blue {
    background-color: #3f86c8;
}

.field.progress {
    color: #fff;
    background: linear-gradient(#0f2766, #27478e);
}

.log {
    flex: 1;
    display: flex;
    flex-direction: column;
    border: 1px solid #8f8f8f;
    background-color: #fff;
}

.messages {
    flex: 1;
}

.hscroll {
    display: flex;
    flex: 0 0 10px;
    border-bottom: 1px solid #555;
    background-color: #eee;
}

.hscroll button {
    width: 10px;
    background-color: #dcdde2;
}

.hscroll .thumb {
    width: 165px;
    border-right: 1px solid #bbb;
    background-color: #dbdce2;
}

.hscroll .right {
    margin-left: auto;
}

.left::before,
.right::before,
.up::before,
.down::before {
    content: "";
    border: 2px solid transparent;
}

.left::before {
    border-right: 3px solid #111;
    border-left: none;
}

.right::before {
    border-left: 3px solid #111;
    border-right: none;
}

.up::before {
    border-bottom: 3px solid #111;
    border-top: none;
}

.down::before {
    border-top: 3px solid #111;
    border-bottom: none;
}

.command {
    flex: 0 0 13px;
}

.status {
    flex: 0 0 12px;
    display: flex;
    align-items: center;
    padding: 0 1px;
    border-bottom: 1px solid #ddd;
    background-color: #f6f6f6;
}

.monitor {
    width: 9px;
    height: 6px;
    background-color: #44605c;
}

.coord {
    width: 53px;
}

.coord.x {
    margin-left: auto;
}

.coord.z {
    width: 67px;
}

/* Field settings */
.fields {
    display: flex;
    flex-direction: column;
}

.muted {
    color: #888;
}

.muted .caret {
    margin: 0 4px 0 2px;
}

.mode {
    padding: 0 2px 0 3px;
}

.levels {
    flex: 1;
    display: flex;
    justify-content: space-between;
    min-height: 0;
    padding: 2px 2px 20px 82px;
    border-top: 1px solid #ddd;
    color: #858585;
}

.levels-form {
    padding-top: 2px;
}

.levels-form a {
    color: #858585;
}

.option.heading {
    padding-top: 4px;
    height: 18px;
}

.levels-form .inner {
    padding-left: 11px;
}

.amount {
    display: flex;
    gap: 3px;
    height: 13px;
    padding-left: 24px;
}

.amount input {
    width: 42px;
    padding-left: 1px;
    border: 1px solid #a5a5a5;
    background-color: #dcdcdc;
}

.amount .steps {
    width: 23px;
    border-color: #999;
}

.option.step {
    height: 18px;
}

.option.range {
    height: 16px;
}

.apply svg {
    width: 10px;
    height: 10px;
}

.limits {
    width: 61px;
    margin-left: 12px;
    border: 1px solid #a5a5a5;
}

.limits input {
    display: block;
    width: 100%;
    height: 12px;
    padding-left: 4px;
    border: none;
    background-color: #fff;
}

.limits input + input {
    border-top: 1px solid #a5a5a5;
}

.option.reset {
    height: 14px;
    padding-left: 25px;
}

.vscroll {
    display: flex;
    flex-direction: column;
    width: 9px;
    background-color: #eaeaec;
}

.vscroll button {
    height: 9px;
    border: 1px solid #c5c5c8;
    background-color: #dedfe3;
}

.vscroll .thumb {
    height: 155px;
    border: 1px solid #cacbd2;
    background-color: #dbdce2;
}

.vscroll .down {
    margin-top: auto;
}

/* Field tree */
.tree {
    flex: 0 0 193px;
    display: grid;
    grid-auto-rows: 1fr;
    padding-bottom: 22px;
    list-style: none;
}

.tree li {
    position: relative;
    display: flex;
    align-items: center;
    padding-left: 13px;
}

.tree .sub {
    padding-left: 25px;
}

/* connector lines */
.tree li::before {
    content: "";
    position: absolute;
    top: 0;
    bottom: 0;
    left: 5px;
    border-left: 1px solid #ccc;
}

.tree li.top::before {
    top: 50%;
}

.tree li.bottom::before {
    bottom: 50%;
}

.tree li::after {
    content: "";
    position: absolute;
    top: 50%;
    left: 5px;
    width: 6px;
    border-top: 1px solid #ccc;
}

.tree .sub::after {
    top: 0;
    bottom: 0;
    left: 17px;
    border-top: none;
    border-left: 1px solid #ccc;
    background: linear-gradient(#ccc, #ccc) center / 100% 1px no-repeat;
}

.tree .sub.end::after {
    bottom: 50%;
    background-position: bottom;
}

.tree .toggle {
    position: absolute;
    left: 3px;
    z-index: 1;
}

.picked {
    margin-left: -1px;
    padding: 1px;
    color: #fff;
    background-color: #142c74;
}
```
